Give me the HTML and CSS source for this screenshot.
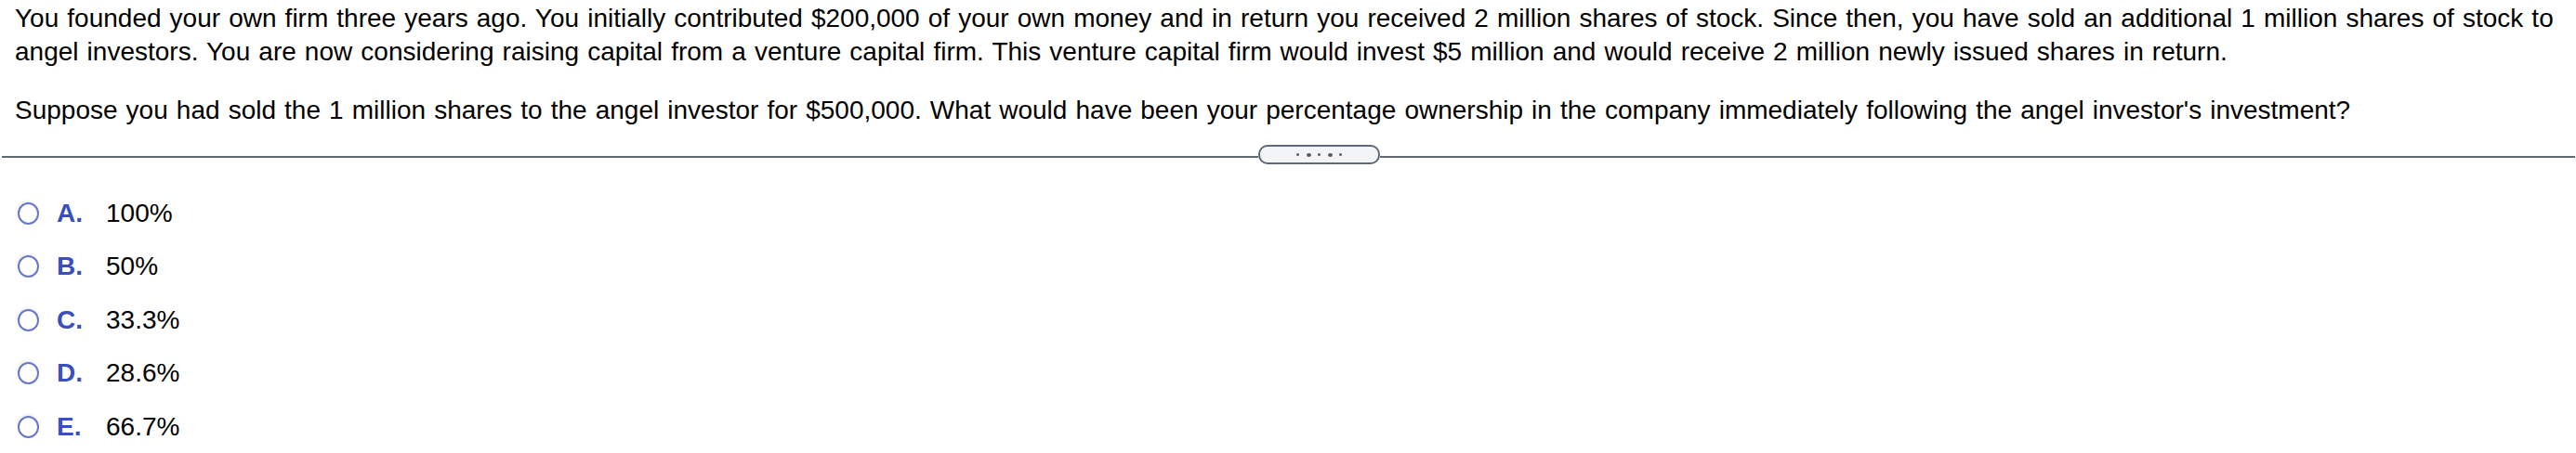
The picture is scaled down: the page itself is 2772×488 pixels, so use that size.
FILE: index.html
```html
<!DOCTYPE html>
<html lang="en">
<head>
<meta charset="utf-8">
<title>Question</title>
<link rel="stylesheet" href="styles.css">
</head>
<body>
<div class="question">
  <p class="stem">You founded your own firm three years ago. You initially contributed $200,000 of your own money and in return you received 2 million shares of stock. Since then, you have sold an additional 1 million shares of stock to angel investors. You are now considering raising capital from a venture capital firm. This venture capital firm would invest $5 million and would receive 2 million newly issued shares in return.</p>
  <p class="stem ask">Suppose you had sold the 1 million shares to the angel investor for $500,000. What would have been your percentage ownership in the company immediately following the angel investor's investment?</p>
</div>
<div class="divider">
  <span class="rule rule-left"></span>
  <span class="pill"><i class="dot"></i><i class="dot big"></i><i class="dot"></i><i class="dot big"></i><i class="dot"></i></span>
  <span class="rule rule-right"></span>
</div>
<ul class="options">
  <li class="option"><span class="radio"></span><span class="letter">A.</span><span class="value">100%</span></li>
  <li class="option"><span class="radio"></span><span class="letter">B.</span><span class="value">50%</span></li>
  <li class="option"><span class="radio"></span><span class="letter">C.</span><span class="value">33.3%</span></li>
  <li class="option"><span class="radio"></span><span class="letter">D.</span><span class="value">28.6%</span></li>
  <li class="option"><span class="radio"></span><span class="letter">E.</span><span class="value">66.7%</span></li>
</ul>
</body>
</html>
```

FILE: styles.css
```css
html, body {
  margin: 0;
  padding: 0;
  background: #ffffff;
}

body {
  font-family: "Liberation Sans", Arial, sans-serif;
  font-size: 28px;
  line-height: 36px;
  color: #000000;
  width: 2772px;
}

.question {
  padding: 2px 0 0 16px;
}

.stem {
  margin: 0;
  word-spacing: 1.3px;
}

.ask {
  margin-top: 27px;
}

.divider {
  display: flex;
  align-items: center;
  height: 21px;
  margin: 19px 1px 0 2px;
}

.rule {
  display: block;
  height: 2px;
  background: #5f6a76;
  margin-top: 5px;
}

.rule-left {
  width: 1352px;
  flex: none;
}

.rule-right {
  flex: 1;
}

.pill {
  box-sizing: border-box;
  width: 131px;
  height: 21px;
  border: 2px solid #5f6a76;
  border-radius: 10px;
  background: #f2f4f6;
  display: flex;
  align-items: center;
  justify-content: center;
  gap: 7.5px;
  flex: none;
}

.dot {
  display: block;
  width: 3px;
  height: 3px;
  border-radius: 50%;
  background: #555b62;
}

.dot.big {
  width: 5px;
  height: 4px;
}

.options {
  list-style: none;
  margin: 24px 0 0 0;
  padding: 0 0 0 19px;
}

.option {
  display: flex;
  align-items: center;
  height: 57.5px;
}

.radio {
  box-sizing: border-box;
  width: 23px;
  height: 24px;
  border: 2px solid #6677cc;
  border-radius: 50%;
  background: #ffffff;
  box-shadow: -1px -2px 3px rgba(0, 0, 0, 0.07);
  margin-right: 19px;
  flex: none;
}

.letter {
  width: 53px;
  font-weight: bold;
  color: #3a4fbd;
  flex: none;
}

.value {
  color: #000000;
}
```
